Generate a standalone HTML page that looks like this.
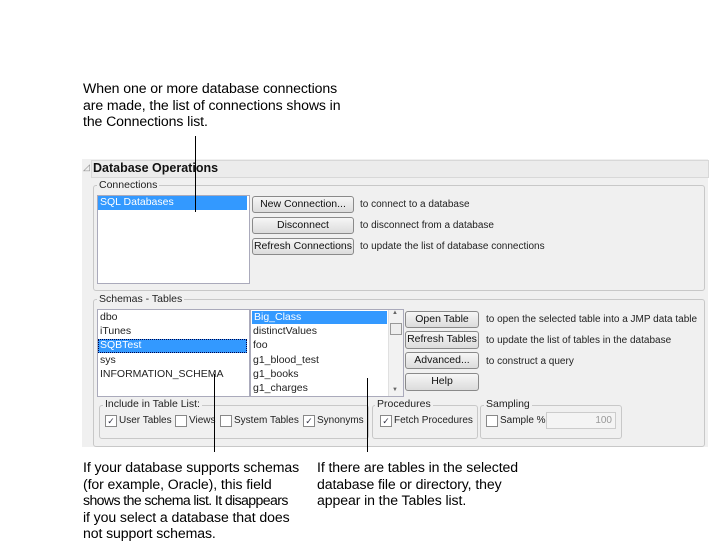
<!DOCTYPE html>
<html><head><style>
body{margin:0;width:711px;height:549px;background:#fff;position:relative;overflow:hidden;font-family:"Liberation Sans",sans-serif}
.a{position:absolute;white-space:nowrap}
.ann{font-size:14.1px;line-height:16.5px;color:#000;letter-spacing:-0.1px}
.ui{font-family:"Liberation Sans",sans-serif;font-size:10px;color:#222}
.box{position:absolute;border:1px solid #c8c8c8;border-radius:3px}
.lg{position:absolute;background:#f0f0f0;padding:0 2px;font-size:10.5px;color:#222;font-family:"Liberation Sans",sans-serif;white-space:nowrap}
.list{position:absolute;background:#fff;border:1px solid #aab;overflow:hidden}
.btn{position:absolute;border:1px solid #8a8a8a;border-radius:3px;background:linear-gradient(#f6f6f6,#dcdcdc);text-align:center;font-family:"Liberation Sans",sans-serif;font-size:10.5px;line-height:15px;color:#111;white-space:nowrap}
.it{position:absolute;left:2px;font-family:"Liberation Sans",sans-serif;font-size:10.5px;color:#222;white-space:nowrap;line-height:13px}
.sel{background:#3399ff;color:#fff}
.cb{position:absolute;width:10px;height:10px;border:1px solid #888;background:#fff;font-size:9px;line-height:10px;text-align:center;color:#334}
.vl{position:absolute;width:1px;background:#000}
</style></head><body>
<div class="a ann" style="left:83px;top:80px">When one or more database connections<br>are made, the list of connections shows in<br>the Connections list.</div>

<div class="a" style="left:82px;top:159px;width:626px;height:288px;background:#f0f0f0"></div>
<div class="a" style="left:91px;top:160px;width:616px;height:16px;border:1px solid #d8d8d8;background:#ececec"></div>
<div class="a" style="left:83px;top:162px;font-size:9px;color:#888">◿</div>
<div class="a" style="left:93px;top:161px;font-size:12.5px;font-weight:bold;color:#111;font-family:'Liberation Sans',sans-serif">Database Operations</div>

<div class="box" style="left:93px;top:185px;width:610px;height:104px"></div>
<div class="lg" style="left:97px;top:179px">Connections</div>
<div class="list" style="left:97px;top:195px;width:151px;height:87px">
<div class="it sel" style="left:0;top:0;width:147px;padding-left:2px;height:14px">SQL Databases</div></div>
<div class="btn" style="left:252px;top:196px;width:100px;height:15px">New Connection...</div>
<div class="btn" style="left:252px;top:217px;width:100px;height:15px">Disconnect</div>
<div class="btn" style="left:252px;top:238px;width:100px;height:15px">Refresh Connections</div>
<div class="a ui" style="left:360px;top:199px">to connect to a database</div>
<div class="a ui" style="left:360px;top:220px">to disconnect from a database</div>
<div class="a ui" style="left:360px;top:241px">to update the list of database connections</div>

<div class="box" style="left:93px;top:299px;width:610px;height:146px"></div>
<div class="lg" style="left:97px;top:293px">Schemas - Tables</div>
<div class="list" style="left:97px;top:309px;width:151px;height:86px">
<div class="it" style="top:1px">dbo</div>
<div class="it" style="top:15px">iTunes</div>
<div class="it sel" style="left:0;top:29px;width:147px;padding-left:2px;height:14px;outline:1px dotted #004;outline-offset:-1px">SQBTest</div>
<div class="it" style="top:44px">sys</div>
<div class="it" style="top:58px">INFORMATION_SCHEMA</div></div>
<div class="list" style="left:250px;top:309px;width:152px;height:86px">
<div class="it sel" style="left:1px;top:1px;width:133px;padding-left:2px;height:13px">Big_Class</div>
<div class="it" style="top:15px">distinctValues</div>
<div class="it" style="top:29px">foo</div>
<div class="it" style="top:44px">g1_blood_test</div>
<div class="it" style="top:58px">g1_books</div>
<div class="it" style="top:72px">g1_charges</div>
<div class="a" style="left:137px;top:0;width:14px;height:86px;background:#f2f2f2;border-left:1px solid #e0e0e0"></div>
<div class="a" style="left:139px;top:13px;width:10px;height:10px;border:1px solid #999;background:#eee"></div>
<div class="a" style="left:141px;top:0;font-size:6px;color:#666">▲</div>
<div class="a" style="left:141px;top:77px;font-size:6px;color:#666">▼</div>
</div>
<div class="btn" style="left:405px;top:311px;width:72px;height:15px">Open Table</div>
<div class="btn" style="left:405px;top:331px;width:72px;height:16px">Refresh Tables</div>
<div class="btn" style="left:405px;top:352px;width:72px;height:15px">Advanced...</div>
<div class="btn" style="left:405px;top:373px;width:72px;height:16px">Help</div>
<div class="a ui" style="left:486px;top:314px">to open the selected table into a JMP data table</div>
<div class="a ui" style="left:486px;top:335px">to update the list of tables in the database</div>
<div class="a ui" style="left:486px;top:356px">to construct a query</div>

<div class="box" style="left:99px;top:405px;width:268px;height:32px"></div>
<div class="lg" style="left:103px;top:398px">Include in Table List:</div>
<div class="cb" style="left:105px;top:415px">✓</div><div class="a ui" style="left:119px;top:415px">User Tables</div>
<div class="cb" style="left:175px;top:415px"></div><div class="a ui" style="left:189px;top:415px">Views</div>
<div class="cb" style="left:220px;top:415px"></div><div class="a ui" style="left:234px;top:415px">System Tables</div>
<div class="cb" style="left:303px;top:415px">✓</div><div class="a ui" style="left:317px;top:415px">Synonyms</div>
<div class="box" style="left:372px;top:405px;width:104px;height:32px"></div>
<div class="lg" style="left:375px;top:398px">Procedures</div>
<div class="cb" style="left:380px;top:415px">✓</div><div class="a ui" style="left:394px;top:415px">Fetch Procedures</div>
<div class="box" style="left:480px;top:405px;width:140px;height:32px"></div>
<div class="lg" style="left:484px;top:398px">Sampling</div>
<div class="cb" style="left:486px;top:415px"></div><div class="a ui" style="left:500px;top:415px">Sample %</div>
<div class="a ui" style="left:546px;top:412px;width:68px;height:15px;border:1px solid #ccc;background:#f4f4f4;text-align:right;color:#999;line-height:15px"><span style="padding-right:3px">100</span></div>

<div class="vl" style="left:195px;top:136px;height:76px"></div>
<div class="vl" style="left:214px;top:374px;height:78px"></div>
<div class="vl" style="left:367px;top:378px;height:74px"></div>

<div class="a ann" style="left:83px;top:459px">If your database supports schemas<br>(for example, Oracle), this field<br><span style="letter-spacing:-0.6px">shows the schema list. It disappears</span><br>if you select a database that does<br>not support schemas.</div>
<div class="a ann" style="left:317px;top:459px">If there are tables in the selected<br>database file or directory, they<br>appear in the Tables list.</div>
</body></html>
